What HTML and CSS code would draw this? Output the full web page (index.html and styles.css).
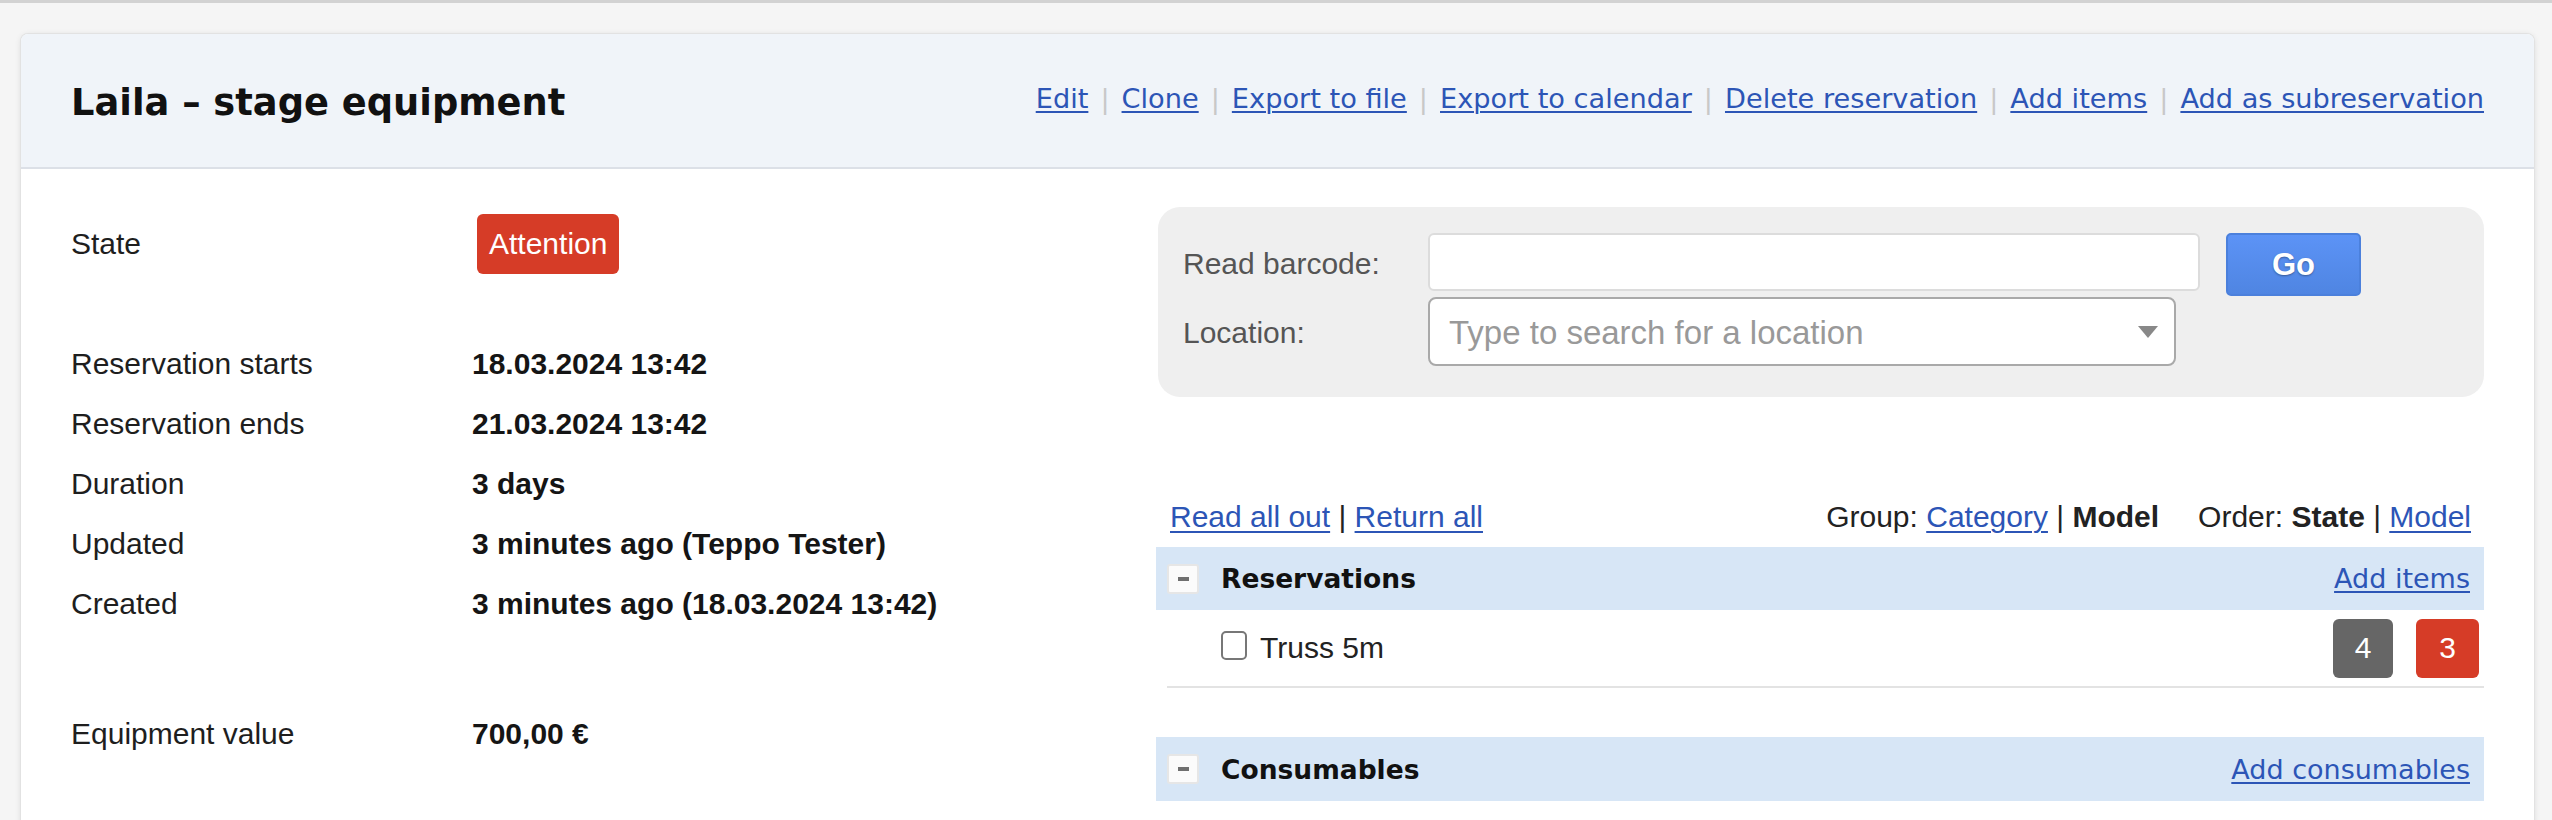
FILE: index.html
```html
<!DOCTYPE html>
<html lang="en">
<head>
<meta charset="utf-8">
<title>Laila – stage equipment</title>
<link rel="stylesheet" href="styles.css">
</head>
<body>
<div class="page">
  <div class="card">
    <div class="card-header">
      <h1>Laila – stage equipment</h1>
      <nav class="actions">
        <a href="#">Edit</a><span class="sep">|</span><a href="#">Clone</a><span class="sep">|</span><a href="#">Export to file</a><span class="sep">|</span><a href="#">Export to calendar</a><span class="sep">|</span><a href="#">Delete reservation</a><span class="sep">|</span><a href="#">Add items</a><span class="sep">|</span><a href="#">Add as subreservation</a>
      </nav>
    </div>
    <div class="card-body">
      <div class="info">
        <div class="row"><div class="label">State</div><div class="value"><span class="state-badge">Attention</span></div></div>
        <div class="row"></div>
        <div class="row"><div class="label">Reservation starts</div><div class="value">18.03.2024 13:42</div></div>
        <div class="row"><div class="label">Reservation ends</div><div class="value">21.03.2024 13:42</div></div>
        <div class="row"><div class="label">Duration</div><div class="value">3 days</div></div>
        <div class="row"><div class="label">Updated</div><div class="value">3 minutes ago (Teppo Tester)</div></div>
        <div class="row"><div class="label">Created</div><div class="value">3 minutes ago (18.03.2024 13:42)</div></div>
        <div class="spacer"></div>
        <div class="row"><div class="label">Equipment value</div><div class="value">700,00 €</div></div>
      </div>
      <div class="side">
        <div class="scanner">
          <label class="scan-label">Read barcode:</label>
          <div class="barcode-input"></div>
          <button class="go-btn">Go</button>
          <label class="scan-label">Location:</label>
          <div class="location-select"><span class="placeholder">Type to search for a location</span><span class="caret"></span></div>
        </div>
        <div class="toolbar">
          <div class="toolbar-left"><a href="#">Read all out</a> | <a href="#">Return all</a></div>
          <div class="toolbar-right"><span class="opt">Group: <a href="#">Category</a> | <b>Model</b></span><span class="opt order">Order: <b>State</b> | <a href="#">Model</a></span></div>
        </div>
        <div class="group-bar">
          <span class="toggle"><span class="minus"></span></span>
          <span class="group-title">Reservations</span>
          <a class="group-link" href="#">Add items</a>
        </div>
        <div class="item-row">
          <span class="checkbox"></span>
          <span class="item-name">Truss 5m</span>
          <span class="counts"><span class="count count-gray">4</span><span class="count count-red">3</span></span>
        </div>
        <div class="group-bar consumables">
          <span class="toggle"><span class="minus"></span></span>
          <span class="group-title">Consumables</span>
          <a class="group-link" href="#">Add consumables</a>
        </div>
      </div>
    </div>
  </div>
</div>
</body>
</html>
```
FILE: styles.css
```css
html, body {
  margin: 0;
  padding: 0;
}

body {
  background: #f5f5f5;
  border-top: 3px solid #d2d2d2;
  font-family: "Liberation Sans", Arial, Helvetica, sans-serif;
  color: #222;
  overflow: hidden;
}

.page {
  padding: 31px 18px 0 21px;
}

.card {
  background: #fff;
  border-radius: 7px 7px 0 0;
  box-shadow: 0 0 0 1px #e2e2e2, 0 1px 6px rgba(0, 0, 0, 0.12);
  min-height: 900px;
}

.card-header {
  box-sizing: border-box;
  height: 135px;
  background: #f0f4f9;
  border-bottom: 2px solid #dce0e7;
  border-radius: 7px 7px 0 0;
  display: flex;
  align-items: center;
  justify-content: space-between;
  padding: 0 50px;
}

.card-header h1 {
  margin: 0;
  font-family: "DejaVu Sans", sans-serif;
  font-weight: bold;
  font-size: 36.8px;
  color: #111;
  padding-top: 3px;
}

.actions {
  font-family: "DejaVu Sans", sans-serif;
  font-size: 27.2px;
  margin-top: -4px;
}

a {
  color: #2c55b6;
  text-decoration: underline;
  text-decoration-thickness: 2px;
  text-underline-offset: 3px;
}

.sep {
  color: #c8c8c8;
  padding: 0 12px;
}

.card-body {
  display: flex;
  padding: 38px 50px 0 50px;
}

.info {
  flex: 1;
  margin-top: 7px;
  font-size: 30px;
}

.row {
  height: 60px;
  display: flex;
  align-items: center;
}

.spacer {
  height: 70px;
}

.label {
  width: 401px;
  color: #1e1e1e;
}

.value {
  font-weight: bold;
  color: #151515;
}

.state-badge {
  display: inline-flex;
  align-items: center;
  height: 60px;
  padding: 0 12px;
  margin-left: 5px;
  background: #d63c27;
  color: #fff;
  font-weight: normal;
  border-radius: 6px;
}

.side {
  width: 1328px;
  flex: none;
}

.scanner {
  margin-left: 2px;
  width: 1326px;
  box-sizing: border-box;
  background: #efefef;
  border-radius: 22px;
  padding: 26px 25px 31px 25px;
  display: grid;
  grid-template-columns: 219px 772px 135px;
  grid-template-rows: 58px 69px;
  column-gap: 26px;
  row-gap: 6px;
}

.scan-label {
  font-size: 30px;
  color: #555;
  align-self: center;
  padding-top: 3px;
}

.barcode-input {
  box-sizing: border-box;
  height: 58px;
  background: #fff;
  border: 2px solid #dcdcdc;
  border-radius: 6px;
}

.go-btn {
  grid-column: 3;
  grid-row: 1 / span 2;
  align-self: start;
  height: 63px;
  width: 135px;
  box-sizing: border-box;
  background: linear-gradient(#5c93f6, #4f85e2);
  border: 2px solid #4b80dc;
  border-radius: 5px;
  color: #fff;
  font-family: "Liberation Sans", Arial, sans-serif;
  font-weight: bold;
  font-size: 31px;
  text-shadow: 0 1px 2px rgba(0, 0, 0, 0.35);
  padding: 0;
}

.location-select {
  grid-column: 2;
  box-sizing: border-box;
  width: 748px;
  height: 69px;
  background: #fff;
  border: 2px solid #a9a9a9;
  border-radius: 8px;
  display: flex;
  align-items: center;
  justify-content: space-between;
  padding: 2px 16px 0 19px;
}

.placeholder {
  font-size: 33px;
  color: #999;
}

.caret {
  width: 0;
  height: 0;
  border-left: 10px solid transparent;
  border-right: 10px solid transparent;
  border-top: 12px solid #888;
  margin-top: -2px;
}

.toolbar {
  height: 40px;
  margin: 100px 0 10px 0;
  padding: 0 13px 0 14px;
  display: flex;
  align-items: center;
  justify-content: space-between;
  font-size: 30px;
  color: #222;
}

.toolbar a {
  text-decoration-thickness: 2px;
  text-underline-offset: 4px;
}

.order {
  margin-left: 39px;
}

.group-bar {
  box-sizing: border-box;
  height: 63px;
  background: #d7e6f6;
  display: flex;
  align-items: center;
  padding: 0 14px 0 11px;
}

.group-bar.consumables {
  height: 64px;
  margin-top: 49px;
}

.toggle {
  box-sizing: border-box;
  width: 32px;
  height: 30px;
  background: #fbfbfb;
  border: 2px solid #e6e6e6;
  border-radius: 3px;
  display: flex;
  align-items: center;
  justify-content: center;
  margin-right: 22px;
}

.minus {
  width: 11px;
  height: 4px;
  background: #6f6f6f;
}

.group-title {
  font-family: "DejaVu Sans", sans-serif;
  font-weight: bold;
  font-size: 26.5px;
  color: #111;
  flex: 1;
}

.group-link {
  font-family: "DejaVu Sans", sans-serif;
  font-size: 27px;
}

.item-row {
  box-sizing: border-box;
  height: 78px;
  margin-left: 11px;
  border-bottom: 2px solid #e3e3e3;
  display: flex;
  align-items: center;
  padding: 0 5px 0 54px;
}

.checkbox {
  box-sizing: border-box;
  width: 26px;
  height: 29px;
  border: 2px solid #777;
  border-radius: 5px;
  background: #fff;
  margin-right: 13px;
  margin-top: -6px;
}

.item-name {
  font-size: 30px;
  color: #222;
  flex: 1;
}

.counts {
  display: flex;
  gap: 23px;
}

.count {
  display: flex;
  align-items: center;
  justify-content: center;
  height: 59px;
  border-radius: 6px;
  color: #fff;
  font-size: 30px;
}

.count-gray {
  width: 60px;
  background: #666;
}

.count-red {
  width: 63px;
  background: #d63c27;
}
```
